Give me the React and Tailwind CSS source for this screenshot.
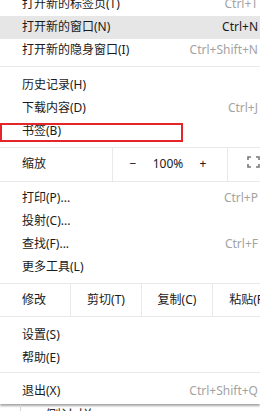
const font = { fontFamily: '"Noto Sans", "Noto Sans CJK SC", sans-serif' }

function Item({ label, shortcut, active, children }) {
  return (
    <div className={`relative h-[23px] flex items-center pl-[22px] pr-[2px] ${active ? 'bg-[#e6e6e6]' : ''}`}>
      <span className="flex-1 text-[12px] leading-[16px] text-[#1a1a1a] whitespace-nowrap">{label}</span>
      {shortcut && (
        <span className={`text-[12px] leading-[16px] whitespace-nowrap ${active ? 'text-[#1a1a1a]' : 'text-[#a3a3a3]'}`}>{shortcut}</span>
      )}
      {children}
    </div>
  )
}

function FullscreenIcon() {
  return (
    <svg width="13" height="12" viewBox="0 0 13 12" fill="none" stroke="#777" strokeWidth="1.6">
      <path d="M1 4V1h3M9 1h3v3M12 8v3H9M4 11H1V8" />
    </svg>
  )
}

export default function App() {
  return (
    <div className="w-[260px] h-[411px] overflow-hidden bg-white" style={font}>
      <div className="-mt-[7.5px] w-[260px] bg-white shadow-[0_2px_2px_rgba(0,0,0,0.35)]">
        {/* tabs / windows */}
        <div className="pb-[4px] border-b border-[#e9e9e9]">
          <Item label="打开新的标签页(T)" shortcut="Ctrl+T" />
          <Item label="打开新的窗口(N)" shortcut="Ctrl+N" active />
          <Item label="打开新的隐身窗口(I)" shortcut="Ctrl+Shift+N" />
        </div>

        <div className="pt-[7px] pb-[4px] border-b border-[#e9e9e9]">
          <Item label="历史记录(H)" />
          <Item label="下载内容(D)" shortcut="Ctrl+J" />
          <Item label="书签(B)">
            <div className="absolute left-0 top-[3.5px] w-[183px] h-[19px] border-2 border-[#e4252a]" />
          </Item>
        </div>

        {/* zoom */}
        <div className="h-[34px] flex items-stretch border-b border-[#e9e9e9] text-[12px] text-[#1a1a1a]">
          <div className="w-[113px] shrink-0 flex items-center pl-[22px] border-r border-[#e9e9e9]">缩放</div>
          <div className="w-[115px] shrink-0 flex items-center border-r border-[#e9e9e9]">
            <span className="ml-[16px] w-[8px] text-center">−</span>
            <span className="ml-[15px] w-[32px] text-center">100%</span>
            <span className="ml-[15px] w-[8px] text-center">+</span>
          </div>
          <div className="flex-1 flex items-center pl-[19px] pb-[4px]">
            <FullscreenIcon />
          </div>
        </div>

        <div className="pt-[5px] pb-[4px] border-b border-[#e9e9e9]">
          <Item label="打印(P)..." shortcut="Ctrl+P" />
          <Item label="投射(C)..." />
          <Item label="查找(F)..." shortcut="Ctrl+F" />
          <Item label="更多工具(L)" />
        </div>

        {/* edit */}
        <div className="h-[33px] flex items-stretch border-b border-[#e9e9e9] text-[12px] text-[#1a1a1a] overflow-hidden">
          <div className="w-[71px] shrink-0 flex items-center pl-[22px] border-r border-[#e9e9e9]">修改</div>
          <div className="w-[71px] shrink-0 flex items-center justify-center border-r border-[#e9e9e9]">剪切(T)</div>
          <div className="w-[71px] shrink-0 flex items-center justify-center border-r border-[#e9e9e9]">复制(C)</div>
          <div className="w-[71px] shrink-0 flex items-center justify-center whitespace-nowrap">粘贴(P)</div>
        </div>

        <div className="pt-[7px] pb-[2px] border-b border-[#e9e9e9]">
          <Item label="设置(S)" />
          <Item label="帮助(E)" />
        </div>

        <div className="pt-[7px] pb-[1px]">
          <Item label="退出(X)" shortcut="Ctrl+Shift+Q" />
        </div>
      </div>

      {/* page behind the menu */}
      <div className="flex h-[20px] mt-[1px]">
        <div className="w-[21px] shrink-0 border-r border-[#d6d6d6]" />
        <div className="pl-[24px] pt-[1px] text-[16px] leading-[20px] text-[#333]">侧边栏</div>
      </div>
    </div>
  )
}
